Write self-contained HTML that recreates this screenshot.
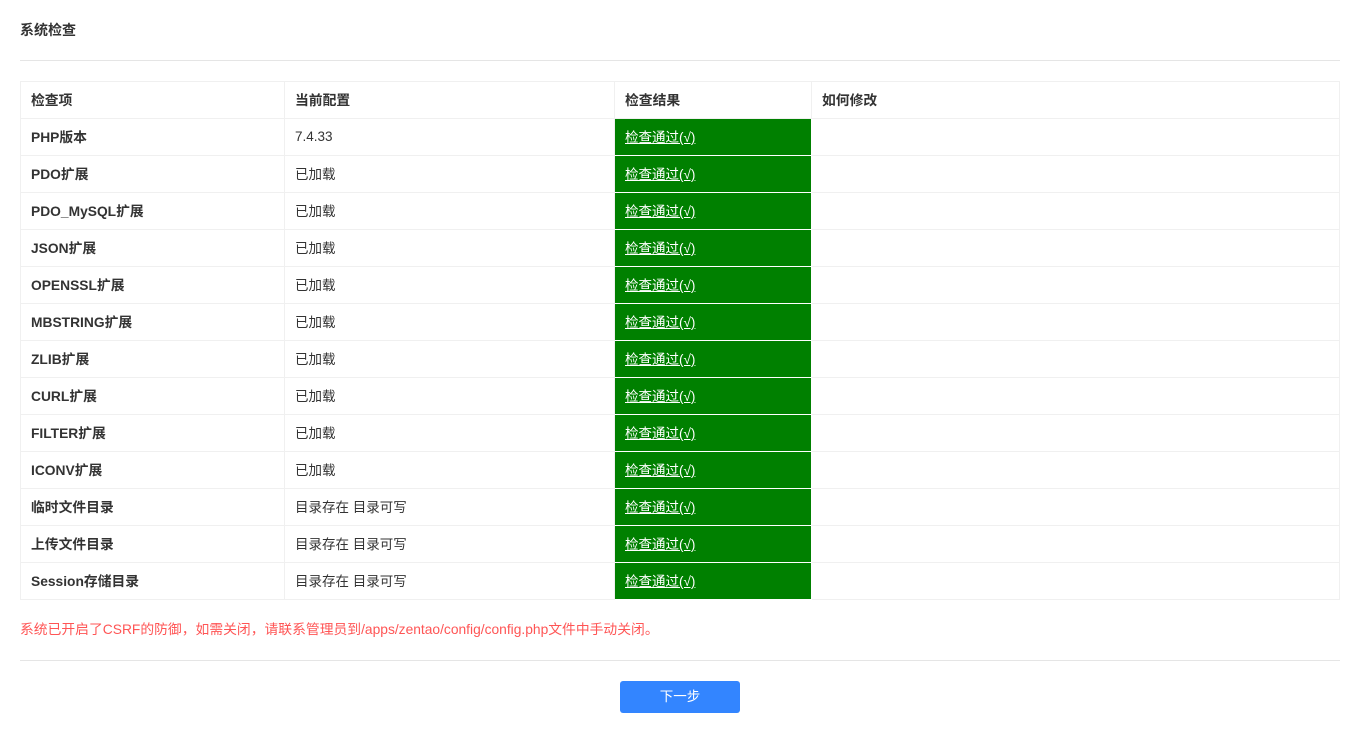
<!DOCTYPE html>
<html><head><meta charset="utf-8"><style>
body{margin:0;background:#fff;font-family:"Liberation Sans","Noto Sans CJK SC",sans-serif;font-size:13px;color:#333;}
.t{position:absolute;left:20px;top:21px;font-weight:bold;line-height:18px;font-size:14px;}
.hr{position:absolute;left:20px;width:1320px;height:1px;background:#e5e5e5;}
table{position:absolute;left:20px;top:81px;width:1320px;border-collapse:collapse;font-size:13.5px;}
td{border:1px solid #f0f0f0;height:36px;padding:0 10px 2px;box-sizing:border-box;}
tr{height:37px;}
td.n{font-weight:bold;color:#333;font-size:13.8px;}
td.g{background:#008000;color:#fff;border:1px solid #fff;text-decoration:underline;}
.w{position:absolute;left:20px;top:621px;color:#f55;line-height:18px;font-size:13.8px;}
.b{position:absolute;left:620px;top:681px;width:120px;height:32px;background:#3385ff;border-radius:3px;color:#fff;text-align:center;line-height:31px;font-size:13.5px;}
</style></head><body>
<div class="t">系统检查</div>
<div class="hr" style="top:60px"></div>
<table>
<tr><td class="n" style="width:264px">检查项</td><td class="n" style="width:330px">当前配置</td><td class="n" style="width:197px">检查结果</td><td class="n">如何修改</td></tr>
<tr><td class="n">PHP版本</td><td>7.4.33</td><td class="g">检查通过(√)</td><td></td></tr>
<tr><td class="n">PDO扩展</td><td>已加载</td><td class="g">检查通过(√)</td><td></td></tr>
<tr><td class="n">PDO_MySQL扩展</td><td>已加载</td><td class="g">检查通过(√)</td><td></td></tr>
<tr><td class="n">JSON扩展</td><td>已加载</td><td class="g">检查通过(√)</td><td></td></tr>
<tr><td class="n">OPENSSL扩展</td><td>已加载</td><td class="g">检查通过(√)</td><td></td></tr>
<tr><td class="n">MBSTRING扩展</td><td>已加载</td><td class="g">检查通过(√)</td><td></td></tr>
<tr><td class="n">ZLIB扩展</td><td>已加载</td><td class="g">检查通过(√)</td><td></td></tr>
<tr><td class="n">CURL扩展</td><td>已加载</td><td class="g">检查通过(√)</td><td></td></tr>
<tr><td class="n">FILTER扩展</td><td>已加载</td><td class="g">检查通过(√)</td><td></td></tr>
<tr><td class="n">ICONV扩展</td><td>已加载</td><td class="g">检查通过(√)</td><td></td></tr>
<tr><td class="n">临时文件目录</td><td>目录存在 目录可写</td><td class="g">检查通过(√)</td><td></td></tr>
<tr><td class="n">上传文件目录</td><td>目录存在 目录可写</td><td class="g">检查通过(√)</td><td></td></tr>
<tr><td class="n">Session存储目录</td><td>目录存在 目录可写</td><td class="g">检查通过(√)</td><td></td></tr>
</table>
<div class="w">系统已开启了CSRF的防御，如需关闭，请联系管理员到/apps/zentao/config/config.php文件中手动关闭。</div>
<div class="hr" style="top:660px"></div>
<div class="b">下一步</div>
</body></html>
